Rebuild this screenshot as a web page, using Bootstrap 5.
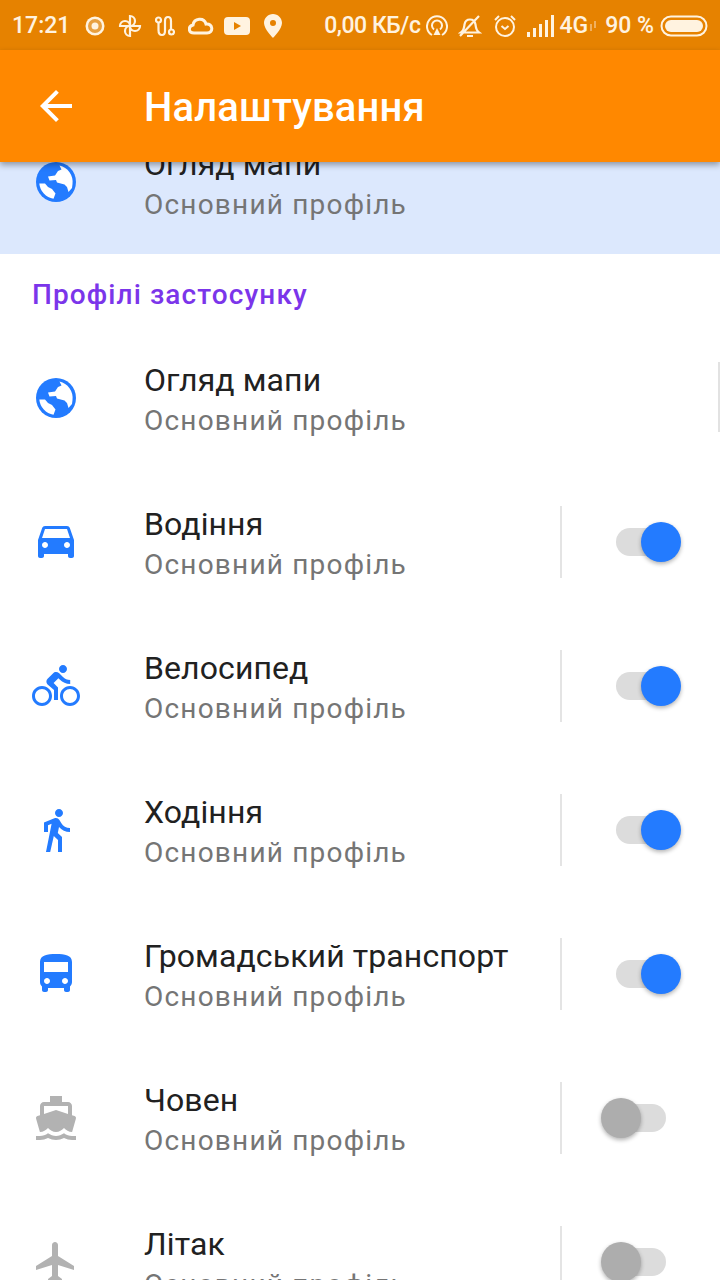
<!DOCTYPE html>
<html lang="uk">
<head>
    <meta charset="UTF-8">
    <meta name="viewport" content="width=device-width, initial-scale=1.0">
    <title>Налаштування</title>
    <link href="https://cdn.jsdelivr.net/npm/bootstrap@5.3.0/dist/css/bootstrap.min.css" rel="stylesheet">
    <style>
        body { background: #fff; font-family: Roboto, "Liberation Sans", sans-serif; color: #212121; }
        .app-shell { width: 720px; height: 1280px; overflow: hidden; }
        .status-bar { height: 50px; background: #e68200; color: #fff3e0; font-weight: 500; font-size: 23px; padding: 2px 12px 0; flex-shrink: 0; }
        .status-bar svg { flex-shrink: 0; display: block; }
        .sb-2 { margin-left: 2px; } .sb-4 { margin-left: 4px; } .sb-6 { margin-left: 6px; } .sb-8 { margin-left: 8px; }
        .sb-10 { margin-left: 10px; } .sb-11 { margin-left: 11px; } .sb-13 { margin-left: 13px; } .sb-14 { margin-left: 14px; } .sb-15 { margin-left: 15px; }
        .net-speed { letter-spacing: -.45px; }
        .tool-bar { height: 112px; background: #ff8800; color: #fff; box-shadow: 0 3px 6px rgba(0,0,0,.35); z-index: 2; flex-shrink: 0; padding-left: 32px; }
        .tool-title { font-size: 40px; font-weight: 500; margin-left: 64px; padding-top: 3px; letter-spacing: .15px; }
        .scroll-area { flex: 1; min-height: 0; overflow: hidden; }
        .profile-row { height: 144px; padding-left: 32px; flex-shrink: 0; }
        .profile-row.current { background: #dce8fd; margin-top: -52px; }
        .row-icon { width: 48px; height: 48px; flex-shrink: 0; fill: #237bff; }
        .row-icon.off { fill: #b2b2b2; }
        .row-text { margin-left: 64px; flex: 1; padding-top: 5px; }
        .row-title { font-size: 32px; line-height: 40px; letter-spacing: .1px; }
        .row-sub { font-size: 28px; line-height: 40px; margin-top: 1px; color: #757575; letter-spacing: 1.2px; }
        .section-head { height: 72px; padding: 18px 0 0 32px; font-size: 28px; line-height: 46px; font-weight: 500; color: #7b35ea; letter-spacing: 1.1px; }
        .switch-cell { width: 160px; height: 72px; border-left: 2px solid #e4e4e4; flex-shrink: 0; }
        .switch-track { width: 50px; height: 28px; border-radius: 14px; background: #dcdcdc; margin-left: 54px; }
        .switch-knob { width: 40px; height: 40px; border-radius: 50%; top: -6px; box-shadow: 0 2px 4px rgba(0,0,0,.3); }
        .switch-track.on .switch-knob { background: #237bff; right: -15px; }
        .switch-track.no .switch-knob { background: #adadad; left: -15px; }
        .scroll-thumb { right: 0; top: 36px; width: 2px; height: 70px; background: #e2e2e2; }
    </style>
</head>
<body>
<div class="app-shell d-flex flex-column">

    <!-- status bar -->
    <div class="status-bar d-flex align-items-center">
        <span>17:21</span>
        <svg class="sb-15" width="20" height="20" viewBox="0 0 20 20"><circle cx="10" cy="10" r="9.500" fill="#fff3e0"/><circle cx="10" cy="10" r="7" fill="#e8a040"/><circle cx="10" cy="10" r="3.500" fill="#fff3e0"/></svg>
        <svg class="sb-13" width="24" height="24" viewBox="0 0 24 24" fill="none" stroke="#fff3e0" stroke-width="2.200"><path d="M12 12V2a5 5 0 0 1 0 10zM12 12h10a5 5 0 0 1-10 0zM12 12v10a5 5 0 0 1 0-10zM12 12H2a5 5 0 0 1 10 0z"/></svg>
        <svg class="sb-13" width="20" height="22" viewBox="0 0 20 22" fill="none" stroke="#fff3e0" stroke-width="2.200" stroke-linecap="round"><circle cx="3.500" cy="5" r="2.500"/><path d="M3.500 8v7c0 3 1.500 5 3.500 5s3-2 3-4V6c0-2 1-4 3-4s3 2 3 4v8"/><circle cx="16.500" cy="17" r="2.500"/></svg>
        <svg class="sb-13" width="26" height="18" viewBox="0 0 26 18" fill="none" stroke="#fff3e0" stroke-width="3"><path d="M6 16c-6 0-6-7-1-8 1-7 11-8 13-1 7-1 8 9 1 9z"/></svg>
        <svg class="sb-10" width="26" height="18" viewBox="0 0 26 18"><rect width="26" height="18" rx="4" fill="#fff3e0"/><path d="M10 5l7 4-7 4z" fill="#e68200"/></svg>
        <svg class="sb-14" width="18" height="24" viewBox="0 0 18 24"><path fill-rule="evenodd" fill="#fff3e0" d="M9 0C4 0 0 4 0 9c0 6 9 15 9 15s9-9 9-15c0-5-4-9-9-9zm0 6a3 3 0 1 1 0 6 3 3 0 0 1 0-6z"/></svg>
        <span class="ms-auto net-speed">0,00 КБ/с</span>
        <svg class="sb-6" width="22" height="24" viewBox="0 0 22 24" fill="none" stroke="#fff3e0" stroke-width="2"><path d="M6 21a10 10 0 1 1 10 0M8 15.500a5 5 0 1 1 6 0"/><path d="M11 14l3.500 7h-7z" fill="#fff3e0" stroke="none"/></svg>
        <svg class="sb-10" width="24" height="24" viewBox="0 0 24 24" fill="none" stroke="#fff3e0" stroke-width="2.200"><path d="M3 18.500c3-2 3-4 3.500-8 .5-3 2.500-5 5.500-5s5 2 5.500 5c.5 4 .5 6 3.500 8zM9 22h6M2 22L21 2"/></svg>
        <svg class="sb-11" width="24" height="24" viewBox="0 0 24 24" fill="none" stroke="#fff3e0" stroke-width="2"><circle cx="12" cy="13" r="9"/><path d="M8.500 12l3.500 3 3.500-3M2 6l4-4M22 6l-4-4"/></svg>
        <svg class="sb-10" width="28" height="22" viewBox="0 0 28 22" fill="#fff3e0"><rect x="0" y="17" width="3" height="5"/><rect x="6" y="13" width="3" height="9"/><rect x="12" y="9" width="3" height="13"/><rect x="18" y="5" width="3" height="17"/><rect x="24" y="0" width="3" height="22"/></svg>
        <span class="sb-4">4G</span>
        <svg class="sb-2" width="7" height="10" viewBox="0 0 7 10" fill="#f0b060"><rect x="0" y="3" width="2" height="7"/><rect x="4" y="0" width="2" height="7"/></svg>
        <span class="sb-8">90 %</span>
        <svg class="sb-6" width="48" height="22" viewBox="0 0 48 22"><rect x="1.500" y="1.500" width="45" height="19" rx="9.500" fill="none" stroke="#fff3e0" stroke-width="2"/><rect x="5" y="5" width="38" height="12" rx="6" fill="#fff3e0"/></svg>
    </div>

    <!-- toolbar -->
    <div class="tool-bar d-flex align-items-center position-relative">
        <svg width="48" height="48" viewBox="0 0 24 24" fill="#fff"><path d="M20 11H7.830l5.590-5.590L12 4l-8 8 8 8 1.410-1.410L7.830 13H20v-2z"/></svg>
        <div class="tool-title">Налаштування</div>
    </div>

    <!-- list -->
    <div class="scroll-area position-relative">
        <div class="profile-row current d-flex align-items-center">
            <svg class="row-icon" viewBox="0 0 48 48"><use href="#globe"/></svg>
            <div class="row-text">
                <div class="row-title">Огляд мапи</div>
                <div class="row-sub">Основний профіль</div>
            </div>
        </div>

        <div class="section-head">Профілі застосунку</div>

        <div class="profile-row d-flex align-items-center position-relative">
            <svg class="row-icon" viewBox="0 0 48 48"><use href="#globe"/></svg>
            <div class="row-text">
                <div class="row-title">Огляд мапи</div>
                <div class="row-sub">Основний профіль</div>
            </div>
            <div class="scroll-thumb position-absolute"></div>
        </div>

        <div class="profile-row d-flex align-items-center">
            <svg class="row-icon" viewBox="0 1 24 24"><path d="M18.920 6.010C18.720 5.420 18.160 5 17.500 5h-11c-.66 0-1.210.42-1.420 1.010L3 12v8c0 .55.45 1 1 1h1c.55 0 1-.45 1-1v-1h12v1c0 .55.45 1 1 1h1c.55 0 1-.45 1-1v-8l-2.080-5.990zM6.500 16c-.83 0-1.500-.67-1.500-1.500S5.670 13 6.500 13s1.500.67 1.500 1.500S7.330 16 6.500 16zm11 0c-.83 0-1.500-.67-1.500-1.500s.67-1.500 1.500-1.500 1.500.67 1.500 1.500-.67 1.500-1.500 1.500zM5 11l1.500-4.500h11L19 11H5z"/></svg>
            <div class="row-text">
                <div class="row-title">Водіння</div>
                <div class="row-sub">Основний профіль</div>
            </div>
            <div class="switch-cell d-flex align-items-center"><div class="switch-track on position-relative"><div class="switch-knob position-absolute"></div></div></div>
        </div>

        <div class="profile-row d-flex align-items-center">
            <svg class="row-icon" viewBox="0 0 24 24"><path d="M15.500 5.500c1.100 0 2-.9 2-2s-.9-2-2-2-2 .9-2 2 .9 2 2 2zM5 12c-2.800 0-5 2.200-5 5s2.200 5 5 5 5-2.200 5-5-2.200-5-5-5zm0 8.500c-1.900 0-3.500-1.600-3.500-3.500s1.600-3.500 3.500-3.500 3.500 1.600 3.500 3.500-1.600 3.500-3.500 3.500zm5.800-10l2.400-2.400.8.8c1.300 1.300 3 2.100 5.100 2.100V9c-1.500 0-2.700-.6-3.600-1.500l-1.900-1.900c-.5-.4-1-.6-1.600-.6s-1.100.2-1.400.6L7.800 8.400c-.4.4-.6.9-.6 1.400 0 .6.2 1.100.6 1.400L11 14v5h2v-6.200l-2.200-2.300zM19 12c-2.800 0-5 2.200-5 5s2.200 5 5 5 5-2.200 5-5-2.200-5-5-5zm0 8.500c-1.900 0-3.500-1.600-3.500-3.500s1.600-3.500 3.500-3.500 3.500 1.600 3.500 3.500-1.600 3.500-3.500 3.500z"/></svg>
            <div class="row-text">
                <div class="row-title">Велосипед</div>
                <div class="row-sub">Основний профіль</div>
            </div>
            <div class="switch-cell d-flex align-items-center"><div class="switch-track on position-relative"><div class="switch-knob position-absolute"></div></div></div>
        </div>

        <div class="profile-row d-flex align-items-center">
            <svg class="row-icon" viewBox="0 0 24 24"><path d="M13.500 5.500c1.100 0 2-.9 2-2s-.9-2-2-2-2 .9-2 2 .9 2 2 2zM9.800 8.900L7 23h2.100l1.800-8 2.100 2v6h2v-7.500l-2.100-2 .6-3C14.800 12 16.800 13 19 13v-2c-1.900 0-3.500-1-4.300-2.400l-1-1.600c-.4-.6-1-1-1.700-1-.3 0-.5.1-.8.1L6 8.300V13h2V9.600l1.800-.7"/></svg>
            <div class="row-text">
                <div class="row-title">Ходіння</div>
                <div class="row-sub">Основний профіль</div>
            </div>
            <div class="switch-cell d-flex align-items-center"><div class="switch-track on position-relative"><div class="switch-knob position-absolute"></div></div></div>
        </div>

        <div class="profile-row d-flex align-items-center">
            <svg class="row-icon" viewBox="0 0 24 24"><path d="M4 16c0 .88.39 1.670 1 2.220V20c0 .55.45 1 1 1h1c.55 0 1-.45 1-1v-1h8v1c0 .55.45 1 1 1h1c.55 0 1-.45 1-1v-1.780c.61-.55 1-1.340 1-2.220V6c0-3.500-3.580-4-8-4s-8 .5-8 4v10zm3.500 1c-.83 0-1.500-.67-1.500-1.500S6.670 14 7.500 14s1.500.67 1.500 1.500S8.330 17 7.500 17zm9 0c-.83 0-1.500-.67-1.500-1.500s.67-1.500 1.500-1.500 1.500.67 1.500 1.500-.67 1.500-1.500 1.500zm1.500-6H6V6h12v5z"/></svg>
            <div class="row-text">
                <div class="row-title">Громадський транспорт</div>
                <div class="row-sub">Основний профіль</div>
            </div>
            <div class="switch-cell d-flex align-items-center"><div class="switch-track on position-relative"><div class="switch-knob position-absolute"></div></div></div>
        </div>

        <div class="profile-row d-flex align-items-center">
            <svg class="row-icon off" viewBox="0 0 24 24"><path d="M20 21c-1.390 0-2.780-.47-4-1.320-2.440 1.710-5.560 1.710-8 0C6.780 20.530 5.390 21 4 21H2v2h2c1.380 0 2.740-.35 4-.99 2.520 1.290 5.480 1.290 8 0 1.260.65 2.620.99 4 .99h2v-2h-2zM3.950 19H4c1.600 0 3.020-.88 4-2 .98 1.120 2.400 2 4 2s3.020-.88 4-2c.98 1.120 2.400 2 4 2h.05l1.890-6.680c.08-.26.06-.54-.06-.78s-.34-.42-.6-.5L20 10.620V6c0-1.100-.9-2-2-2h-3V1H9v3H6c-1.100 0-2 .9-2 2v4.620l-1.290.42c-.26.08-.48.26-.6.5s-.15.52-.06.78L3.950 19zM6 6h12v3.970L12 8 6 9.970V6z"/></svg>
            <div class="row-text">
                <div class="row-title">Човен</div>
                <div class="row-sub">Основний профіль</div>
            </div>
            <div class="switch-cell d-flex align-items-center"><div class="switch-track no position-relative"><div class="switch-knob position-absolute"></div></div></div>
        </div>

        <div class="profile-row d-flex align-items-center">
            <svg class="row-icon off" viewBox="0 0 24 24"><path d="M21 16v-2l-8-5V3.500c0-.83-.67-1.500-1.500-1.500S10 2.670 10 3.500V9l-8 5v2l8-2.500V19l-2 1.500V22l3.500-1 3.500 1v-1.500L13 19v-5.500l8 2.500z"/></svg>
            <div class="row-text">
                <div class="row-title">Літак</div>
                <div class="row-sub">Основний профіль</div>
            </div>
            <div class="switch-cell d-flex align-items-center"><div class="switch-track no position-relative"><div class="switch-knob position-absolute"></div></div></div>
        </div>
    </div>
</div>

<svg width="0" height="0" class="position-absolute">
    <defs>
        <g id="globe">
            <circle cx="24" cy="24" r="20"/>
            <path fill="#fff" d="M27.500 7.500A17 17 0 0 1 40.500 26L40 30 36.500 34 35 29 32.500 26.500 25 24.500 24 22 17.500 22.500 16 18.500 23 17.500 26 13 29.500 11.500zM7.300 25.500L13 25.500 16 29 20 31 23.500 35.500 21.500 40.700A17 17 0 0 1 7.300 25.500z"/>
        </g>
    </defs>
</svg>

<script src="https://cdn.jsdelivr.net/npm/bootstrap@5.3.0/dist/js/bootstrap.bundle.min.js"></script>
</body>
</html>
